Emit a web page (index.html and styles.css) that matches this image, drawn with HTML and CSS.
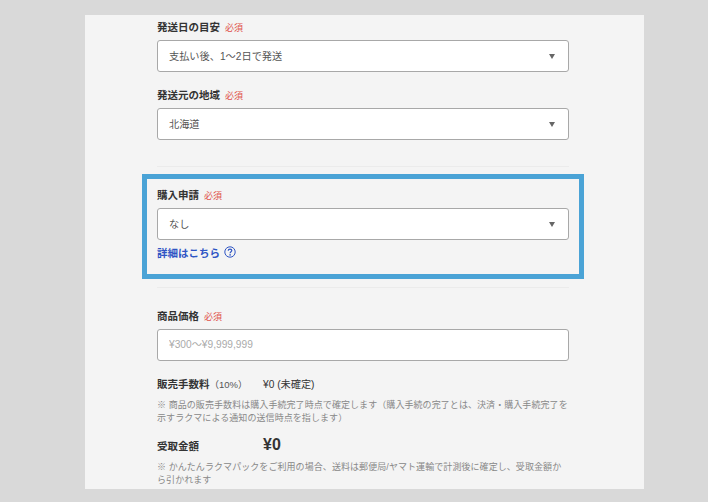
FILE: index.html
```html
<!DOCTYPE html>
<html lang="ja">
<head>
    <meta charset="UTF-8">
    <meta name="viewport" content="width=device-width, initial-scale=1.0">
    <title>商品の出品</title>
    <link rel="stylesheet" href="styles.css">
</head>
<body>

    <div class="panel">
        <div class="column">

            <div class="field first-field">
                <div class="label">発送日の目安 <span class="required">必須</span></div>
                <div class="select">支払い後、1〜2日で発送<span class="arrow"></span></div>
            </div>

            <div class="field">
                <div class="label">発送元の地域 <span class="required">必須</span></div>
                <div class="select">北海道<span class="arrow"></span></div>
            </div>

            <div class="divider divider-top"></div>

            <div class="highlight">
                <div class="label">購入申請 <span class="required">必須</span></div>
                <div class="select">なし<span class="arrow"></span></div>
                <a class="detail-link" href="#">詳細はこちら
                    <svg class="help-icon" width="12" height="12" viewBox="0 0 12 12">
                        <circle cx="6" cy="6" r="5.2" fill="none" stroke="#2f55c4" stroke-width="1"/>
                        <path d="M4.2 4.7C4.3 3.6 5.1 3.1 6 3.1C7 3.1 7.8 3.7 7.8 4.6C7.8 5.8 6.1 5.8 6.1 7.2" fill="none" stroke="#2f55c4" stroke-width="1.2"/>
                        <circle cx="6.1" cy="8.9" r="0.8" fill="#2f55c4"/>
                    </svg>
                </a>
            </div>

            <div class="divider divider-bottom"></div>

            <div class="field">
                <div class="label">商品価格 <span class="required">必須</span></div>
                <input class="price-input" type="text" placeholder="¥300〜¥9,999,999">
            </div>

            <div class="summary-row fee-row">
                <div class="summary-label">販売手数料<span class="rate">（10%）</span></div>
                <div class="fee-value">¥0 (未確定)</div>
            </div>
            <p class="note fee-note">※ 商品の販売手数料は購入手続完了時点で確定します（購入手続の完了とは、決済・購入手続完了を示すラクマによる通知の送信時点を指します）</p>

            <div class="summary-row receive-row">
                <div class="summary-label">受取金額</div>
                <div class="receive-value">¥0</div>
            </div>
            <p class="note receive-note">※ かんたんラクマパックをご利用の場合、送料は郵便局/ヤマト運輸で計測後に確定し、受取金額から引かれます</p>

        </div>
    </div>

</body>
</html>
```

FILE: styles.css
```css
* {
    box-sizing: border-box;
}

body {
    margin: 0;
    height: 502px;
    padding: 15px 64px 13px 85px;
    background-color: #d9d9d9;
    font-family: "Liberation Sans", "Noto Sans CJK JP", sans-serif;
    overflow: hidden;
}

.panel {
    height: 474px;
    padding: 3px 75px 0 72px;
    background-color: #f4f4f4;
    overflow: hidden;
}

.field {
    margin-top: 14px;
}

.first-field {
    margin-top: 0;
}

.label {
    height: 18px;
    margin-bottom: 4px;
    font-size: 10.5px;
    font-weight: bold;
    line-height: 18px;
    color: #333;
}

.required {
    margin-left: 2px;
    font-size: 9px;
    font-weight: normal;
    color: #e0524a;
}

.select {
    display: flex;
    align-items: center;
    justify-content: space-between;
    height: 32px;
    padding: 0 13px 2px 11px;
    border: 1px solid #a8a8a8;
    border-radius: 3px;
    background-color: #fff;
    font-size: 10.2px;
    color: #555;
}

.arrow {
    width: 0;
    height: 0;
    margin-top: 2px;
    border-top: 5px solid #666;
    border-left: 3px solid transparent;
    border-right: 3px solid transparent;
}

.divider {
    height: 1px;
    background-color: #ebebeb;
}

.divider-top {
    margin: 26px 0 7px;
}

.divider-bottom {
    margin: 8px 0 19px;
}

.highlight {
    margin: 0 -15px;
    padding: 7px 10px 13px;
    border: 5px solid #4aa3d6;
}

.detail-link {
    display: flex;
    align-items: center;
    gap: 4px;
    height: 18px;
    margin-top: 3px;
    font-size: 10.5px;
    font-weight: bold;
    color: #2f55c4;
    text-decoration: none;
}

.price-input {
    display: block;
    width: 100%;
    height: 32px;
    padding: 0 11px 2px;
    border: 1px solid #a8a8a8;
    border-radius: 3px;
    background-color: #fff;
    font-family: inherit;
    font-size: 10.2px;
}

.price-input::placeholder {
    color: #aaa;
}

.summary-row {
    display: flex;
    align-items: center;
    height: 18px;
}

.fee-row {
    margin-top: 13px;
}

.receive-row {
    margin-top: 11px;
}

.summary-label {
    width: 106px;
    font-size: 10.5px;
    font-weight: bold;
    color: #333;
}

.rate {
    font-size: 9.5px;
    font-weight: normal;
    color: #555;
}

.fee-value {
    font-size: 10.2px;
    color: #333;
}

.receive-value {
    font-size: 16px;
    font-weight: bold;
    color: #333;
}

.note {
    margin: 0;
    font-size: 9px;
    line-height: 13px;
    letter-spacing: 0.07px;
    color: #888;
}

.fee-note {
    margin-top: 7px;
}

.receive-note {
    margin-top: 7px;
}
```
